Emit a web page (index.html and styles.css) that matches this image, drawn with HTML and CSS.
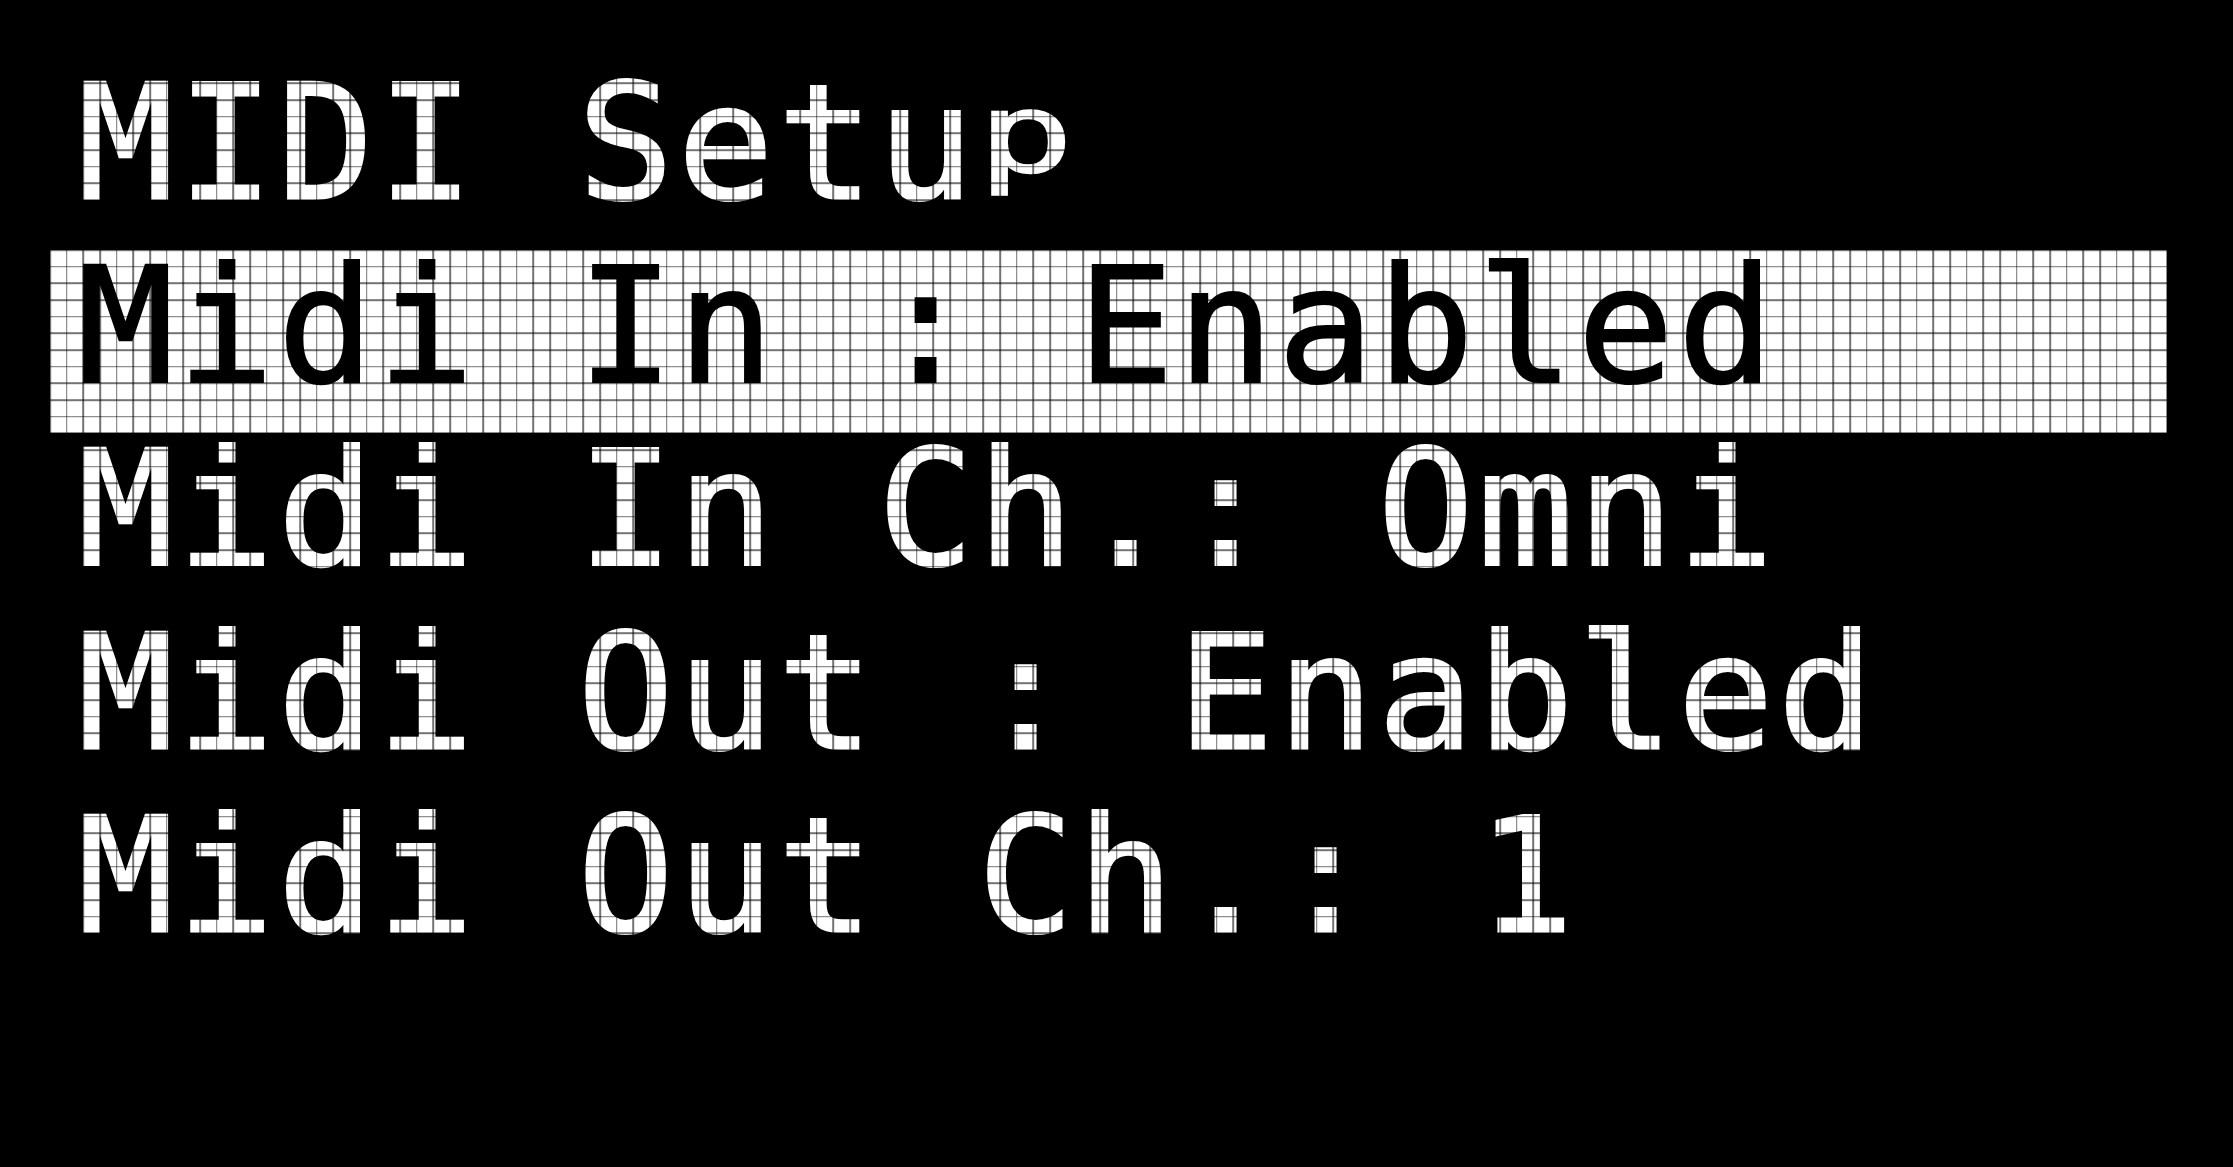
FILE: index.html
```html
<!DOCTYPE html>
<html lang="en">
<head>
<meta charset="utf-8">
<title>MIDI Setup</title>
<link rel="stylesheet" href="styles.css">
</head>
<body>
<main class="screen">
  <div class="line title">MIDI Setu<span class="short">p</span></div>
  <div class="line sel">Midi In : Enabled</div>
  <div class="line">Midi In Ch.: Omni</div>
  <div class="line">Midi Out : Enabled</div>
  <div class="line">Midi Out Ch.: 1</div>
</main>
<div class="grid" aria-hidden="true"></div>
</body>
</html>
```
FILE: styles.css
```css
html, body {
  margin: 0;
  padding: 0;
  background: #000;
  width: 2233px;
  height: 1167px;
  overflow: hidden;
}
body {
  position: relative;
  font-family: "DejaVu Sans Mono", "Liberation Mono", monospace;
}
.screen {
  display: flex;
  flex-direction: column;
  padding: 66.6667px 0 0 50px;
}
.line {
  box-sizing: border-box;
  width: 2116.6667px;
  height: 183.3333px;
  padding-left: 27.5px;
  font-size: 160px;
  line-height: 154px;
  letter-spacing: 3.67px;
  white-space: pre;
  color: #fff;
  -webkit-text-stroke: 2.2px currentColor;
}
.line.sel {
  background: #fff;
  color: #000;
}
.short {
  display: inline-block;
  transform: scaleY(0.69);
  transform-origin: 50% 45px;
}
.grid {
  position: absolute;
  inset: 0;
  pointer-events: none;
  background-image:
    repeating-linear-gradient(to right, rgba(0,0,0,0.55) 0 1.6px, transparent 1.6px 16.6667px),
    repeating-linear-gradient(to bottom, rgba(0,0,0,0.55) 0 1.6px, transparent 1.6px 16.6667px);
  background-position: -0.8px -0.8px;
}
```
